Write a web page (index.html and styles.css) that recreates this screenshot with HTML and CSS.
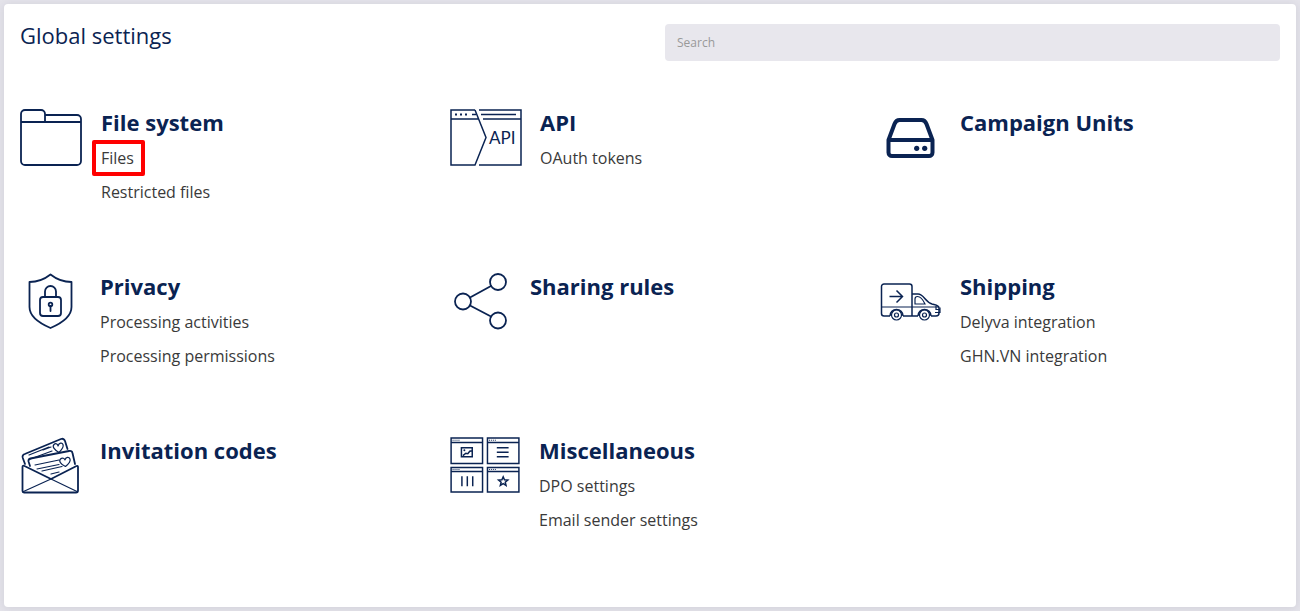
FILE: index.html
```html
<!DOCTYPE html>
<html lang="en">
<head>
<meta charset="utf-8">
<title>Global settings</title>
<link rel="stylesheet" href="styles.css">
</head>
<body>
<main class="card">
  <header class="header">
    <h1 class="title">Global settings</h1>
    <input class="search" type="search" placeholder="Search" aria-label="Search">
  </header>
  <div class="grid">
    <section class="item">
      <svg class="icon" width="63" height="57" viewBox="0 0 63 57" aria-hidden="true">
        <path d="M1 13V5a4 4 0 0 1 4-4h16a4 4 0 0 1 4 4v8M25 6h32a4 4 0 0 1 4 4v42a4 4 0 0 1-4 4H5a4 4 0 0 1-4-4V13h60"/>
      </svg>
      <div class="body">
        <h2 class="name">File system</h2>
        <ul class="links">
          <li><a class="link link-marked" href="#">Files</a></li>
          <li><a class="link" href="#">Restricted files</a></li>
        </ul>
      </div>
    </section>
    <section class="item">
      <svg class="icon thin" width="72" height="57" viewBox="0 0 72 57" aria-hidden="true">
        <path d="M25 1H1v55h24L36 28.500 25 1M29 1h42v55H29M1 10h27M33 10h38M22 5.500h4M31 5.500h35"/>
        <path class="dots" d="M5 5.500h2M10 5.500h2M15 5.500h2"/>
        <text class="glyph-label" x="39" y="35">API</text>
      </svg>
      <div class="body">
        <h2 class="name">API</h2>
        <ul class="links">
          <li><a class="link" href="#">OAuth tokens</a></li>
        </ul>
      </div>
    </section>
    <section class="item">
      <svg class="icon heavy" width="62" height="57" viewBox="0 0 62 57" aria-hidden="true">
        <path d="M8.500 31l6-16q1.500-4 5-4h22q3.500 0 5 4l6 16v12.500a3.500 3.500 0 0 1-3.500 3.500H12a3.500 3.500 0 0 1-3.500-3.500zM8.500 31h44"/>
        <circle class="solid" cx="36.700" cy="39.300" r="2.600"/><circle class="solid" cx="44.700" cy="39.300" r="2.600"/>
      </svg>
      <div class="body">
        <h2 class="name">Campaign Units</h2>
      </div>
    </section>
    <section class="item">
      <svg class="icon" width="62" height="57" viewBox="0 0 62 57" aria-hidden="true">
        <path d="M30.500 1.500Q21 9 9.500 9v25q0 12 21 21 21-9 21-21V9q-11.500 0-21-7.500z"/>
        <rect x="20" y="24" width="21" height="19" rx="3"/>
        <path d="M25 24v-5.500a5.500 5.500 0 0 1 11 0V24M30.500 33v5"/>
        <circle cx="30.500" cy="31.500" r="1.800"/>
      </svg>
      <div class="body">
        <h2 class="name">Privacy</h2>
        <ul class="links">
          <li><a class="link" href="#">Processing activities</a></li>
          <li><a class="link" href="#">Processing permissions</a></li>
        </ul>
      </div>
    </section>
    <section class="item">
      <svg class="icon" width="62" height="57" viewBox="0 0 62 57" aria-hidden="true">
        <circle cx="13" cy="28.500" r="8"/><circle cx="48" cy="9" r="8"/><circle cx="48" cy="47.500" r="8"/>
        <path d="M20 24.500l21-11.500M20 32.500l21 11"/>
      </svg>
      <div class="body">
        <h2 class="name">Sharing rules</h2>
      </div>
    </section>
    <section class="item">
      <svg class="icon thin" width="62" height="57" viewBox="0 0 62 57" aria-hidden="true">
        <path d="M10 43H4a2.500 2.500 0 0 1-2.500-2.500v-27A2.500 2.500 0 0 1 4 11h25.500a2.500 2.500 0 0 1 2.500 2.500V43H23M32 21h6c6 0 7 8 14 10 4 1 7 1 7 4v5q0 3-3 3h-5M38 43h-6"/>
        <path class="fine" d="M1.500 34h57M35 31v-5q0-2.500 2.500-2.500 4 0 7.500 7.500zM56 33v3.500h4M55 39.500h5v-5"/>
        <path d="M9.500 23.500h13M16.500 17.500l6 6-6 6"/>
        <path d="M10 43a6.500 6.500 0 0 1 13 0M38 43a6.500 6.500 0 0 1 13 0"/>
        <circle class="fine" cx="16.500" cy="42" r="5"/><circle class="fine" cx="16.500" cy="42" r="2"/>
        <circle class="fine" cx="44.500" cy="42" r="5"/><circle class="fine" cx="44.500" cy="42" r="2"/>
      </svg>
      <div class="body">
        <h2 class="name">Shipping</h2>
        <ul class="links">
          <li><a class="link" href="#">Delyva integration</a></li>
          <li><a class="link" href="#">GHN.VN integration</a></li>
        </ul>
      </div>
    </section>
    <section class="item">
      <svg class="icon" width="62" height="57" viewBox="0 0 62 57" aria-hidden="true">
        <path d="M5 27L2.800 21q-1-3 2-4L41 2q3-1 4 2l2.500 8M10 29l-1.500-4.500q-.500-2.500 2-3L49 14q3-.500 3.500 2L55 27"/>
        <path d="M2.500 30v24q0 1.500 1.500 1.500h52q2 0 2-2V30q0-1.500-1.500-1L31 42 4.500 29q-2-1-2 1z"/>
        <path class="fine" d="M3.500 54.500L31 42l26 12.500M9 22.500l23-8.500M9 18l20-8M23 13l8-3M15 28l24-5M17 32l22-4.500M22 34l20-4.500M31 37l8-2"/>
        <path class="fine" d="M39 15.500c-5-3-7-6-5-8s4 0 4 1.500c1-3 4-4 5-1.500s-1 5-4 8zM45.500 29.500c-5-2.500-7-5.500-5-7.500s4-.500 4.500 1c.500-3 4-3.500 5-1s-1.500 5-4.500 7.500z"/>
      </svg>
      <div class="body">
        <h2 class="name">Invitation codes</h2>
      </div>
    </section>
    <section class="item">
      <svg class="icon thin" width="71" height="57" viewBox="0 0 72 58" aria-hidden="true">
        <path d="M1 1h32v26H1zM38 1h32v26H38zM1 31h32v25H1zM38 31h32v25H38zM1 5.500h32M38 5.500h32M1 35h32M38 35h32"/>
        <path d="M11.500 11h11v9h-11zM13 19l3-2.500 2 .500 2-2.500 2.500-.500M47.500 11h12M47.500 15.500h12M47.500 20h12M12 40v10M17.500 40v10M23 40v10"/>
        <circle class="solid" cx="14.500" cy="13.500" r="1"/>
        <path d="M54 40.500l1.300 3 3.400.300-2.600 2.200.800 3.300-2.900-1.800-2.900 1.800.800-3.300-2.600-2.200 3.400-.300z"/>
        <path class="specks" d="M2.500 3.300h7M39.500 3.300h7M2.500 33h7M39.500 33h7"/>
      </svg>
      <div class="body">
        <h2 class="name">Miscellaneous</h2>
        <ul class="links">
          <li><a class="link" href="#">DPO settings</a></li>
          <li><a class="link" href="#">Email sender settings</a></li>
        </ul>
      </div>
    </section>
  </div>
</main>
</body>
</html>
```
FILE: styles.css
```css
* {
  box-sizing: border-box;
}

body {
  margin: 0;
  padding: 4px;
  min-height: 100vh;
  display: flex;
  background: #e4e3ea;
  color: #3a3a3a;
  font-family: "Open Sans", "Noto Sans", sans-serif;
  font-size: 16px;
}

.card {
  flex: 1;
  padding: 20px 16px;
  background: #fff;
  border-radius: 4px;
  box-shadow: 0 1px 8px rgba(40, 40, 70, 0.1);
}

.header {
  display: grid;
  grid-template-columns: 1fr 1fr;
  gap: 30px;
  align-items: start;
}

.title {
  margin: 0;
  color: #0a2352;
  font-size: 22px;
  font-weight: 400;
  line-height: 22px;
}

.search {
  width: 100%;
  height: 37px;
  padding: 0 12px;
  border: 0;
  border-radius: 4px;
  background: #e8e7ed;
  color: #3a3a3a;
  font: inherit;
  font-size: 12px;
}

.search::placeholder {
  color: #999;
  opacity: 1;
}

.grid {
  display: grid;
  grid-template-columns: repeat(3, 1fr);
  grid-auto-rows: minmax(100px, auto);
  gap: 64px 30px;
  margin-top: 48px;
}

.item {
  display: flex;
  align-items: flex-start;
  gap: 18px;
}

.icon {
  flex: none;
  fill: none;
  stroke: #0a2352;
  stroke-width: 1.8;
  stroke-linecap: round;
  stroke-linejoin: round;
}

.thin {
  stroke-width: 1.5;
  stroke-linecap: butt;
  stroke-linejoin: miter;
}

.heavy {
  stroke-width: 4;
}

.dots {
  stroke-width: 2;
}

.fine {
  stroke-width: 1.2;
}

.specks {
  stroke-width: 1;
  stroke-dasharray: 1 1;
}

.solid {
  fill: #0a2352;
  stroke: none;
}

.glyph-label {
  fill: #0a2352;
  stroke: none;
  font-family: Lato, sans-serif;
  font-size: 17px;
}

.name {
  margin: 0;
  color: #0a2352;
  font-size: 22px;
  font-weight: 700;
  line-height: 26px;
}

.links {
  margin: 6px 0 0;
  padding: 0;
  list-style: none;
}

.link {
  position: relative;
  display: inline-block;
  color: inherit;
  line-height: 34px;
  text-decoration: none;
  vertical-align: top;
}

.link-marked::after {
  content: "";
  position: absolute;
  inset: -1px -11px -1px -9px;
  border: 4px solid #f00;
  border-radius: 2px;
}
```
